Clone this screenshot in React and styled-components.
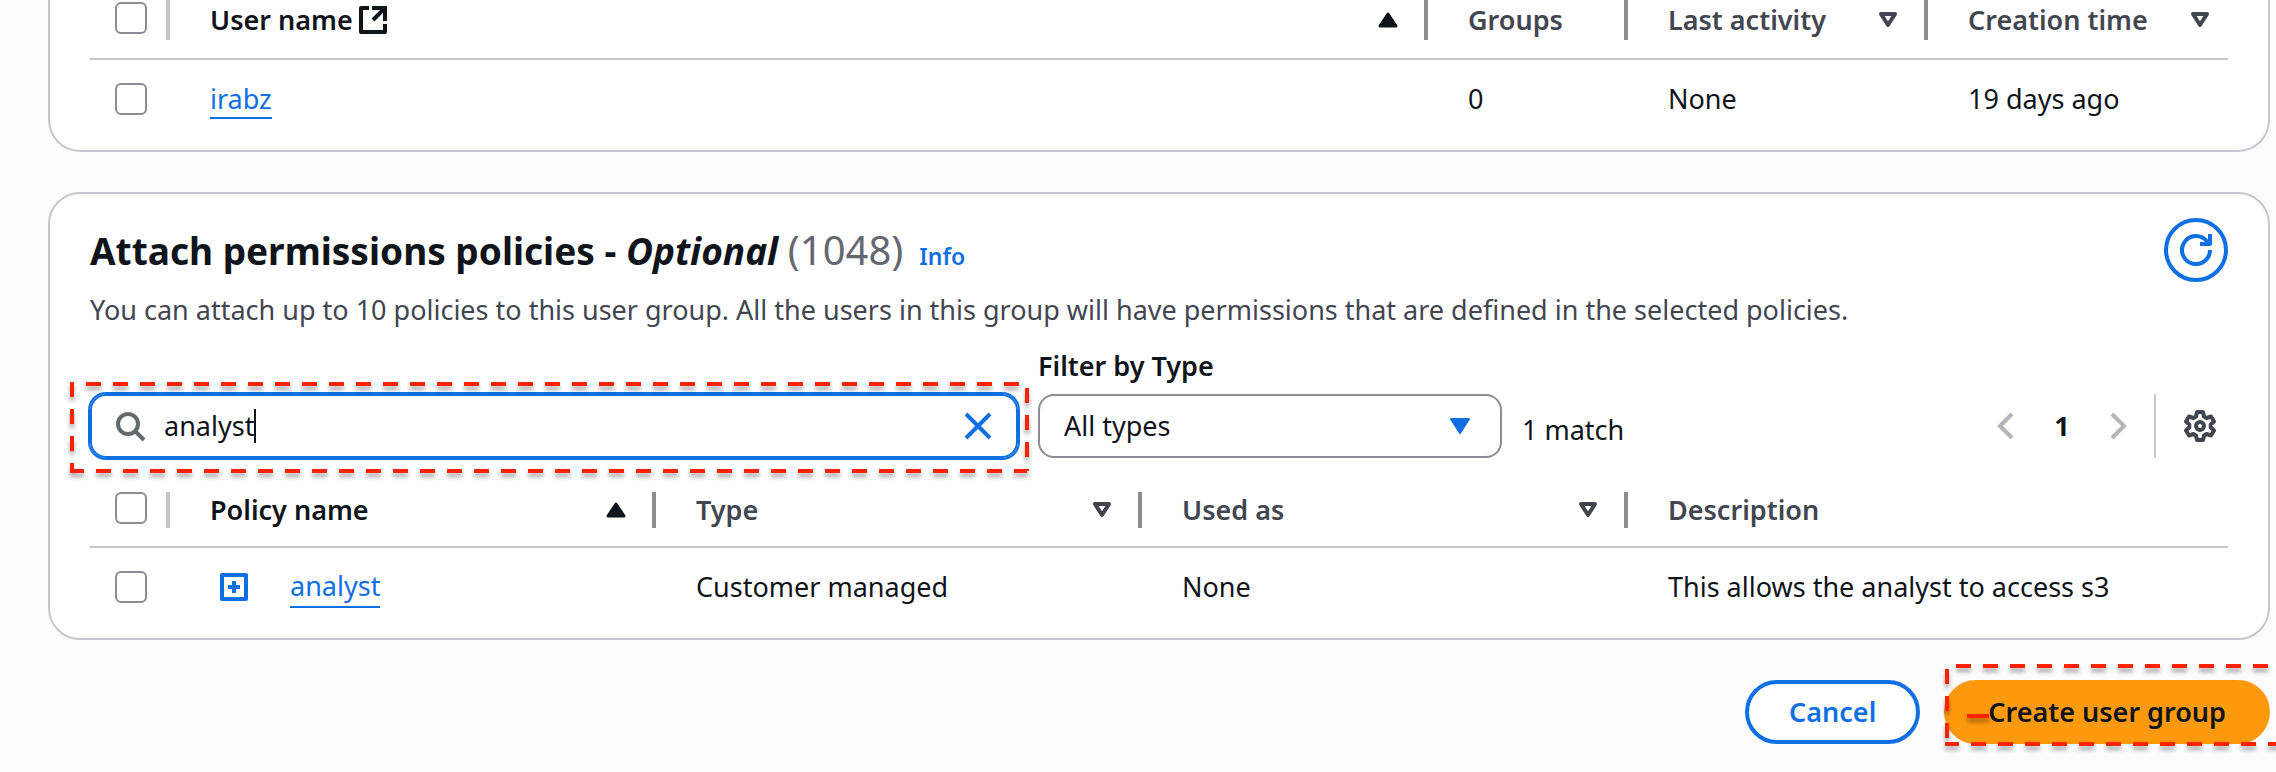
import React, { useState } from 'react';
import styled, { createGlobalStyle, css } from 'styled-components';

const color = {
  page: '#fcfcfd',
  surface: '#ffffff',
  text: '#0f141a',
  muted: '#424650',
  soft: '#656871',
  border: '#c6c6cd',
  control: '#8c8c94',
  disabled: '#b4b4bb',
  link: '#0f6fe3',
  primary: '#fd990d',
  mark: '#ff2200',
};

const GlobalStyle = createGlobalStyle`
  *, *::before, *::after { box-sizing: border-box; }
  body {
    margin: 0;
    background: ${color.page};
    color: ${color.text};
    font: 400 27px/40px "Noto Sans", "Open Sans", sans-serif;
  }
  button, input, select { font: inherit; color: inherit; margin: 0; }
`;

const Page = styled.main`
  padding: 0 6px 28px 48px;
  overflow: hidden;
`;

const Card = styled.section`
  background: ${color.surface};
  border: 2px solid ${color.border};
  border-radius: 32px;
  padding: ${(p) => (p.$continued ? '0 40px 12px' : '24px 40px 12px')};
  ${(p) =>
    p.$continued &&
    css`
      border-top: 0;
      border-top-left-radius: 0;
      border-top-right-radius: 0;
      margin-bottom: 40px;
    `}
`;

/* Tables */

const Table = styled.table`
  width: 100%;
  table-layout: fixed;
  border-collapse: separate;
  border-spacing: 0;
`;

const Col = styled.col`
  width: ${(p) => (p.$width ? `${p.$width}px` : 'auto')};
`;

const Th = styled.th`
  padding: 0 0 18px;
  border-bottom: 2px solid ${color.border};
  text-align: left;
  font-weight: 600;
  color: ${(p) => (p.$active ? color.text : color.muted)};
`;

const HeadCell = styled.div`
  display: flex;
  align-items: center;
  gap: 4px;
  height: ${(p) => (p.$tall ? 40 : 36)}px;
  padding: 0 20px 0 40px;
  white-space: nowrap;
  border-right: 4px solid ${color.control};
  ${(p) =>
    p.$last &&
    css`
      border-right: 0;
      padding-right: 12px;
    `}
`;

const SelectHead = styled(HeadCell)`
  padding: 0 0 4px 25px;
  border-right-color: ${color.border};
`;

const SortButton = styled.button`
  display: flex;
  margin-left: auto;
  padding: 0 6px;
  border: 0;
  background: none;
`;

const Td = styled.td`
  height: 78px;
  padding: 0 0 0 40px;
  white-space: nowrap;
`;

const SelectTd = styled(Td)`
  padding-left: 25px;
`;

const Checkbox = styled.input.attrs({ type: 'checkbox' })`
  appearance: none;
  display: block;
  width: 32px;
  height: 32px;
  background: ${color.surface};
  border: 2px solid ${color.control};
  border-radius: 6px;
  &:checked {
    background: ${color.link};
    border-color: ${color.link};
  }
`;

const TextLink = styled.a`
  color: ${color.link};
  text-decoration: none;
  border-bottom: 2px solid ${color.link};
`;

const PolicyCell = styled.div`
  display: flex;
  align-items: center;
  gap: 40px;
  padding-left: 8px;
`;

const IconButton = styled.button`
  display: flex;
  padding: 0;
  border: 0;
  background: none;
  color: ${(p) => p.$color || color.link};
`;

/* Card header */

const Header = styled.header`
  display: flex;
  align-items: center;
  justify-content: space-between;
`;

const Title = styled.h2`
  margin: 0;
  padding-top: 6px;
  font-size: 37px;
  line-height: 48px;
  font-weight: 700;
`;

const Count = styled.span`
  font-size: 40px;
  font-weight: 400;
  color: ${color.soft};
`;

const InfoLink = styled.a`
  margin-left: 16px;
  font-size: 23px;
  font-weight: 600;
  color: ${color.link};
  text-decoration: none;
`;

const RefreshButton = styled.button`
  display: flex;
  align-items: center;
  justify-content: center;
  width: 64px;
  height: 64px;
  padding: 0;
  border: 4px solid ${color.link};
  border-radius: 50%;
  background: ${color.surface};
  color: ${color.link};
`;

const Description = styled.p`
  margin: 8px 0 16px;
  color: ${color.muted};
`;

/* Filter bar */

const Filters = styled.div`
  display: flex;
  align-items: flex-end;
  gap: 20px;
  margin-bottom: 34px;
`;

const SearchBox = styled.div`
  position: relative;
  display: flex;
  align-items: center;
  flex: 0 1 928px;
  height: 64px;
  padding: 0 22px;
  border: 2px solid ${color.link};
  border-radius: 16px;
  box-shadow: 0 0 0 2px ${color.link};
`;

const SearchField = styled.label`
  display: flex;
  align-items: center;
  flex: 1;
  color: ${color.soft};
`;

const SearchInput = styled.input`
  field-sizing: content;
  margin-left: 18px;
  padding: 0;
  border: 0;
  outline: 0;
  background: none;
  color: ${color.text};
  caret-color: transparent;
`;

const Caret = styled.span`
  width: 2px;
  height: 34px;
  background: ${color.text};
`;

const FilterField = styled.div`
  display: flex;
  flex-direction: column;
  gap: 8px;
  flex: 0 1 464px;
`;

const FieldLabel = styled.label`
  font-weight: 600;
`;

const SelectWrap = styled.div`
  position: relative;
  display: grid;
`;

const Select = styled.select`
  appearance: none;
  height: 64px;
  padding: 0 64px 0 24px;
  border: 2px solid ${color.control};
  border-radius: 16px;
  background: ${color.surface};
`;

const SelectArrow = styled.span`
  position: absolute;
  top: 24px;
  right: 32px;
  display: flex;
  color: ${color.link};
  pointer-events: none;
`;

const MatchCount = styled.span`
  line-height: 56px;
  white-space: nowrap;
`;

const Pager = styled.nav`
  display: flex;
  align-items: center;
  height: 64px;
  margin-left: auto;
  padding-right: 12px;
`;

const PageNumber = styled.button`
  width: 80px;
  padding: 0;
  border: 0;
  background: none;
  font-weight: 700;
  text-align: center;
`;

const Separator = styled.span`
  width: 2px;
  height: 64px;
  margin: 0 28px 0 20px;
  background: ${color.border};
`;

/* Actions */

const Actions = styled.footer`
  display: flex;
  justify-content: flex-end;
  gap: 24px;
  margin-top: 40px;
`;

const Button = styled.button`
  height: 64px;
  padding: 0 40px;
  border: 4px solid ${(p) => (p.$primary ? color.primary : color.link)};
  border-radius: 32px;
  background: ${(p) => (p.$primary ? color.primary : color.surface)};
  color: ${(p) => (p.$primary ? color.text : color.link)};
  font-weight: 600;
  white-space: nowrap;
`;

const Marked = styled.div`
  position: relative;
`;

/* Red dashed call-outs drawn over the controls */

const MarkSvg = styled.svg`
  display: block;
  width: 100%;
  height: 100%;
  overflow: visible;
  stroke: ${color.mark};
  stroke-width: 4;
  filter: drop-shadow(0 4px 2px rgba(0, 0, 0, 0.35));
`;

const MarkBox = styled.div`
  position: absolute;
  inset: ${(p) => p.$inset};
  pointer-events: none;
`;

function DashedMark({ inset, topStart, leftStart, stroke }) {
  const dash = '15 12';
  return (
    <MarkBox $inset={inset} aria-hidden="true">
      <MarkSvg>
        <line x1={topStart} y1="0" x2="100%" y2="0" strokeDasharray={dash} />
        <line x1="0" y1={leftStart} x2="0" y2="100%" strokeDasharray={dash} />
        <line x1="-2" y1="100%" x2="100%" y2="100%" strokeDasharray={dash} strokeDashoffset="1" />
        <line x1="100%" y1="4" x2="100%" y2="100%" strokeDasharray={dash} />
        {stroke && <line x1="20" y1="50" x2="42" y2="50" />}
      </MarkSvg>
    </MarkBox>
  );
}

/* Icons, on a 16 unit grid */

const Icon = ({ children, ...rest }) => (
  <svg width="32" height="32" viewBox="0 0 16 16" fill="none" stroke="currentColor" strokeWidth="2" aria-hidden="true" {...rest}>
    {children}
  </svg>
);

const ExternalIcon = () => (
  <Icon>
    <path d="M6 2H2v12h12v-4" strokeLinejoin="round" />
    <path d="M7.500 2H14v6.500M8 8l6-6" />
  </Icon>
);

const SearchIcon = () => (
  <Icon>
    <circle cx="7" cy="7" r="5" />
    <path d="m15 15-4.500-4.500" />
  </Icon>
);

const CloseIcon = () => (
  <Icon>
    <path d="m2 2 12 12M14 2 2 14" />
  </Icon>
);

const PlusBoxIcon = () => (
  <Icon strokeLinejoin="round">
    <path d="M2 2h12v12H2zM8 5v6M5 8h6" />
  </Icon>
);

const ChevronIcon = ({ right }) => (
  <Icon>
    <path d={right ? 'm5 2 6 6-6 6' : 'm11 2-6 6 6 6'} />
  </Icon>
);

const ReloadIcon = () => (
  <svg width="32" height="32" viewBox="0 0 32 32" fill="none" stroke="currentColor" strokeWidth="4" strokeLinejoin="round" aria-hidden="true">
    <path d="M30 16a14 14 0 1 1-3-8.600l3 2.600" />
    <path d="M20 10h10V0" />
  </svg>
);

const GearIcon = () => (
  <svg width="32" height="32" viewBox="0 0 32 32" fill="none" stroke="currentColor" strokeWidth="4" strokeLinejoin="round" aria-hidden="true">
    <path d="M13 2h6l1 4.500 2.500 1.500 4.500-1.500 3 5-3.300 3v3l3.300 3-3 5-4.500-1.500-2.500 1.500-1 4.500h-6l-1-4.500-2.500-1.500-4.500 1.500-3-5 3.300-3v-3l-3.300-3 3-5 4.500 1.500 2.500-1.500z" />
    <circle cx="16" cy="16" r="4" />
  </svg>
);

const Triangle = ({ up, filled }) => (
  <svg width="20" height="16" viewBox="0 0 20 16" aria-hidden="true">
    <path
      d={up ? 'M10 2 2 14h16z' : filled ? 'M1 1h18l-9 14z' : 'M3 2h14L10 13z'}
      fill={up || filled ? 'currentColor' : 'none'}
      stroke="currentColor"
      strokeWidth={up ? 3 : filled ? 2 : 4}
      strokeLinejoin="round"
    />
  </svg>
);

/* Table parts */

function SelectAllHead({ tall, label }) {
  return (
    <Th scope="col">
      <SelectHead $tall={tall}>
        <Checkbox aria-label={label} />
      </SelectHead>
    </Th>
  );
}

function ColumnHead({ children, sort, active, last, tall }) {
  return (
    <Th scope="col" $active={active} aria-sort={active ? 'ascending' : undefined}>
      <HeadCell $last={last} $tall={tall}>
        {children}
        {sort && (
          <SortButton type="button" aria-label="Sort column">
            <Triangle up={active} />
          </SortButton>
        )}
      </HeadCell>
    </Th>
  );
}

function UsersCard() {
  return (
    <Card $continued>
      <Table>
        <colgroup>
          <Col $width={80} />
          <Col />
          <Col $width={200} />
          <Col $width={300} />
          <Col $width={300} />
        </colgroup>
        <thead>
          <tr>
            <SelectAllHead tall label="Select all users" />
            <ColumnHead tall sort active>
              User name
              <ExternalIcon />
            </ColumnHead>
            <ColumnHead tall>Groups</ColumnHead>
            <ColumnHead tall sort>Last activity</ColumnHead>
            <ColumnHead tall sort last>Creation time</ColumnHead>
          </tr>
        </thead>
        <tbody>
          <tr>
            <SelectTd>
              <Checkbox aria-label="Select irabz" />
            </SelectTd>
            <Td>
              <TextLink href="#irabz">irabz</TextLink>
            </Td>
            <Td>0</Td>
            <Td>None</Td>
            <Td>19 days ago</Td>
          </tr>
        </tbody>
      </Table>
    </Card>
  );
}

function PoliciesCard() {
  const [query, setQuery] = useState('analyst');
  return (
    <Card>
      <Header>
        <Title>
          Attach permissions policies - <em>Optional</em> <Count>(1048)</Count>
          <InfoLink href="#info">Info</InfoLink>
        </Title>
        <RefreshButton type="button" aria-label="Refresh policies">
          <ReloadIcon />
        </RefreshButton>
      </Header>
      <Description>
        You can attach up to 10 policies to this user group. All the users in this group will have permissions that are
        defined in the selected policies.
      </Description>

      <Filters>
        <SearchBox>
          <SearchField>
            <SearchIcon />
            <SearchInput
              type="text"
              aria-label="Search policies"
              value={query}
              onChange={(e) => setQuery(e.target.value)}
            />
            <Caret />
          </SearchField>
          <IconButton type="button" aria-label="Clear search" onClick={() => setQuery('')}>
            <CloseIcon />
          </IconButton>
          <DashedMark inset="-12px -11px -15px -20px" topStart="14" leftStart="-2" />
        </SearchBox>

        <FilterField>
          <FieldLabel htmlFor="type-filter">Filter by Type</FieldLabel>
          <SelectWrap>
            <Select id="type-filter" defaultValue="all">
              <option value="all">All types</option>
              <option value="customer">Customer managed</option>
            </Select>
            <SelectArrow>
              <Triangle filled />
            </SelectArrow>
          </SelectWrap>
        </FilterField>

        <MatchCount>1 match</MatchCount>

        <Pager aria-label="Policy pages">
          <IconButton type="button" $color={color.disabled} aria-label="Previous page">
            <ChevronIcon />
          </IconButton>
          <PageNumber type="button">1</PageNumber>
          <IconButton type="button" $color={color.disabled} aria-label="Next page">
            <ChevronIcon right />
          </IconButton>
          <Separator />
          <IconButton type="button" $color={color.muted} aria-label="Preferences">
            <GearIcon />
          </IconButton>
        </Pager>
      </Filters>

      <Table>
        <colgroup>
          <Col $width={80} />
          <Col $width={486} />
          <Col $width={486} />
          <Col $width={486} />
          <Col />
        </colgroup>
        <thead>
          <tr>
            <SelectAllHead label="Select all policies" />
            <ColumnHead sort active>Policy name</ColumnHead>
            <ColumnHead sort>Type</ColumnHead>
            <ColumnHead sort>Used as</ColumnHead>
            <ColumnHead last>Description</ColumnHead>
          </tr>
        </thead>
        <tbody>
          <tr>
            <SelectTd>
              <Checkbox aria-label="Select analyst" />
            </SelectTd>
            <Td>
              <PolicyCell>
                <IconButton type="button" aria-label="Expand analyst">
                  <PlusBoxIcon />
                </IconButton>
                <TextLink href="#analyst">analyst</TextLink>
              </PolicyCell>
            </Td>
            <Td>Customer managed</Td>
            <Td>None</Td>
            <Td>This allows the analyst to access s3</Td>
          </tr>
        </tbody>
      </Table>
    </Card>
  );
}

export default function App() {
  return (
    <>
      <GlobalStyle />
      <Page>
        <UsersCard />
        <PoliciesCard />
        <Actions>
          <Button type="button">Cancel</Button>
          <Marked>
            <Button type="button" $primary>Create user group</Button>
            <DashedMark inset="-14px -24px 0 3px" topStart="9" leftStart="3" stroke />
          </Marked>
        </Actions>
      </Page>
    </>
  );
}
